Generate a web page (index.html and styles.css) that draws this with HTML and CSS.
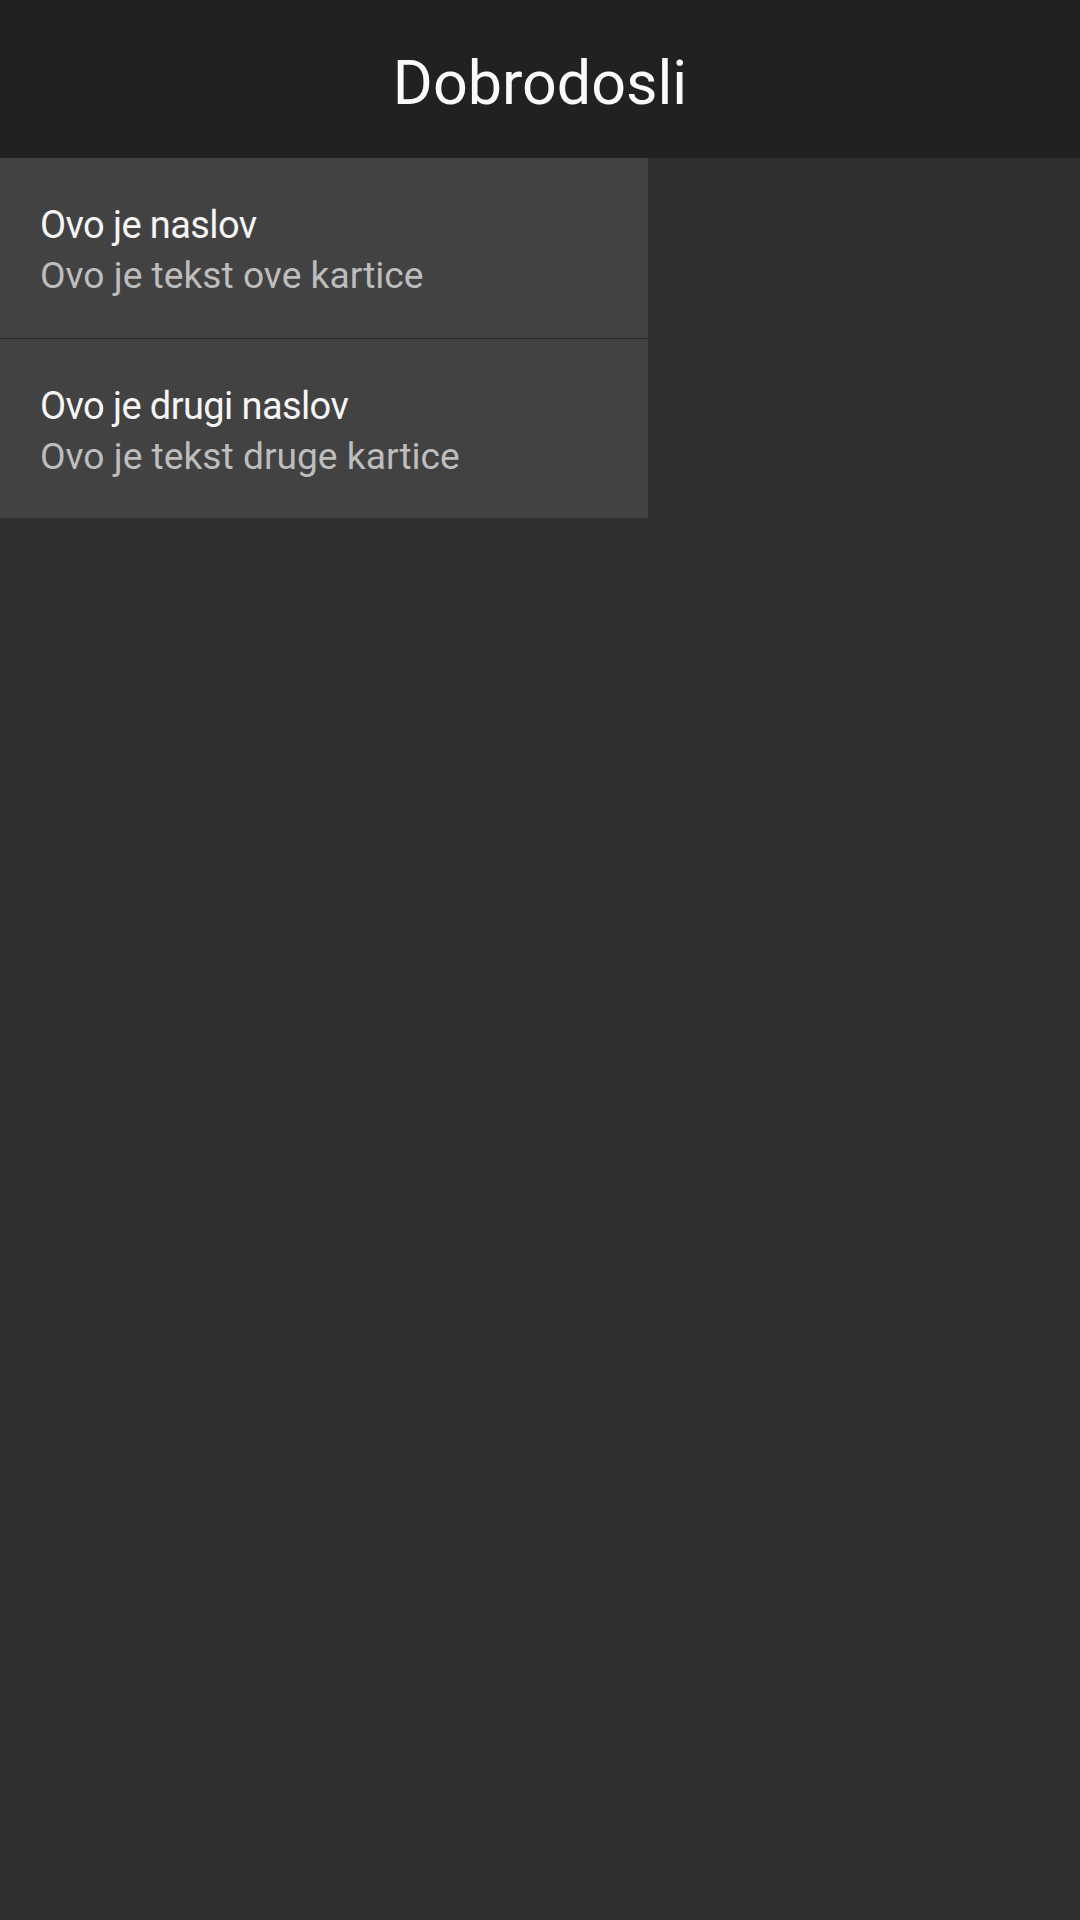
FILE: index.html
```html
<!DOCTYPE html>
<html lang="hr">
<head>
<meta charset="utf-8">
<title>Dobrodosli</title>
<link rel="stylesheet" href="styles.css">
</head>
<body>
<header class="appbar"><h1 class="appbar-title">Dobrodosli</h1></header>
<main class="list">
  <section class="card">
    <div class="card-title">Ovo je naslov</div>
    <div class="card-text">Ovo je tekst ove kartice</div>
  </section>
  <section class="card">
    <div class="card-title">Ovo je drugi naslov</div>
    <div class="card-text">Ovo je tekst druge kartice</div>
  </section>
</main>
</body>
</html>
```

FILE: styles.css
```css
html, body {
  margin: 0;
  padding: 0;
  background: #303030;
  min-height: 100%;
}
body {
  font-family: Roboto, "Noto Sans", sans-serif;
  width: 1080px;
  height: 1920px;
}
.appbar {
  height: 158px;
  box-sizing: border-box;
  padding-top: 8px;
  background: #212121;
  display: flex;
  align-items: center;
  justify-content: center;
}
.appbar-title {
  margin: 0;
  font-weight: 400;
  font-size: 61px;
  color: #fafafa;
  line-height: 1;
}
.list {
  width: 648px;
  display: flex;
  flex-direction: column;
}
.card {
  background: #424242;
  height: 180px;
  box-sizing: border-box;
  padding: 42px 40px 0;
}
.card + .card {
  border-top: 1px solid #2b2b2b;
}
.card-title {
  font-size: 38px;
  letter-spacing: -0.6px;
  line-height: 50px;
  color: #f5f5f5;
}
.card-text {
  font-size: 37.2px;
  line-height: 51px;
  color: #bdbdbd;
}
```
